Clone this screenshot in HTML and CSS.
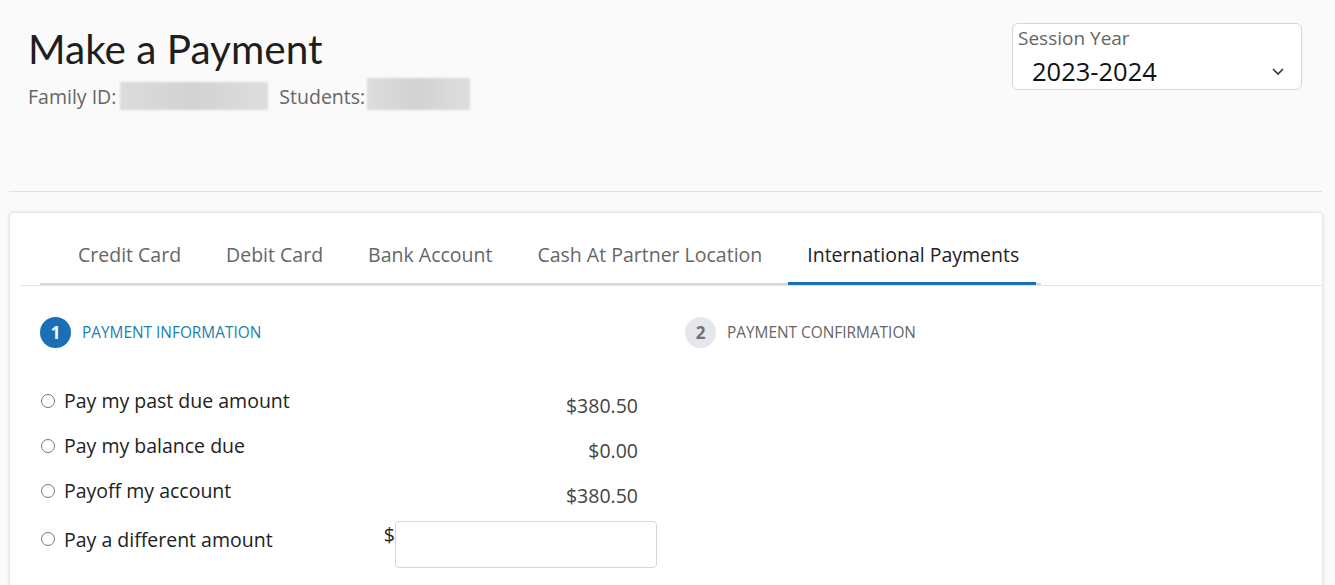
FILE: index.html
```html
<!DOCTYPE html>
<html lang="en">
<head>
  <meta charset="UTF-8" />
  <title>Make a Payment</title>
  <link rel="stylesheet" href="styles.css">
</head>
<body>

  <header class="page-head">
    <div class="head-left">
      <h1>Make a Payment</h1>
      <div class="ids">
        <span class="id-label">Family ID:</span>
        <span class="blur blur-family"></span>
        <span class="id-label students">Students:</span>
        <span class="blur blur-students"></span>
      </div>
    </div>
    <div class="session">
      <span class="session-label">Session Year</span>
      <div class="session-value">
        <span>2023-2024</span>
        <svg width="14" height="9" viewBox="0 0 14 9"><path d="M2 2l5 5 5-5" fill="none" stroke="#333" stroke-width="1.6"/></svg>
      </div>
    </div>
  </header>

  <hr class="divider">

  <main class="card">
    <div class="tabs-row">
      <nav class="tabs">
        <a class="tab">Credit Card</a>
        <a class="tab">Debit Card</a>
        <a class="tab">Bank Account</a>
        <a class="tab">Cash At Partner Location</a>
        <a class="tab active">International Payments</a>
      </nav>
    </div>

    <div class="steps">
      <div class="step current">
        <span class="step-num">1</span>
        <span class="step-name">PAYMENT INFORMATION</span>
      </div>
      <div class="step">
        <span class="step-num">2</span>
        <span class="step-name">PAYMENT CONFIRMATION</span>
      </div>
    </div>

    <form class="options">
      <label class="option">
        <input type="radio" name="amount">
        <span class="opt-text">Pay my past due amount</span>
        <span class="opt-amount">$380.50</span>
      </label>
      <label class="option">
        <input type="radio" name="amount">
        <span class="opt-text">Pay my balance due</span>
        <span class="opt-amount">$0.00</span>
      </label>
      <label class="option">
        <input type="radio" name="amount">
        <span class="opt-text">Payoff my account</span>
        <span class="opt-amount">$380.50</span>
      </label>
      <label class="option other">
        <input type="radio" name="amount">
        <span class="opt-text">Pay a different amount</span>
        <span class="dollar">$</span>
        <input type="text" class="amount-input">
      </label>
    </form>
  </main>

</body>
</html>
```

FILE: styles.css
```css
:root {
  --bg: #fafafa;
  --text: #222222;
  --muted: #666666;
  --blue: #1b6fb6;
  --step-blue: #1a7fb0;
  --border: #d6d6d6;
  --white: #ffffff;
}

body {
  margin: 0;
  background-color: var(--bg);
  color: var(--text);
  font-family: 'Open Sans', 'Noto Sans', sans-serif;
  overflow: hidden;
}

.page-head {
  display: flex;
  justify-content: space-between;
  padding: 23px 33px 0 28px;
  height: 191px;
  box-sizing: border-box;
}

h1 {
  margin: 0;
  font-family: 'Lato', sans-serif;
  font-weight: 400;
  font-size: 40.5px;
  line-height: 52px;
  color: #1e1e1e;
}

.ids {
  display: flex;
  align-items: center;
  margin-top: 7px;
  font-size: 19.5px;
  color: var(--muted);
}

.blur {
  display: inline-block;
  height: 28px;
  background: linear-gradient(90deg, #dcdcdc, #d2d2d2 50%, #dedede);
  filter: blur(1px);
}

.blur-family {
  width: 148px;
  margin: 0 11px 0 4px;
}

.blur-students {
  width: 103px;
  height: 32px;
  margin-top: -4px;
  margin-left: 2px;
}

.session {
  width: 290px;
  height: 67px;
  box-sizing: border-box;
  background: var(--white);
  border: 1px solid var(--border);
  border-radius: 6px;
  padding: 1px 16px 0 5px;
}

.session-label {
  display: block;
  font-size: 19px;
  color: var(--muted);
  line-height: 26px;
}

.session-value {
  display: flex;
  justify-content: space-between;
  align-items: center;
  padding-left: 14px;
  margin-top: 2px;
  font-size: 25.5px;
  color: #111;
  line-height: 36px;
}

.divider {
  border: none;
  border-top: 1px solid #e0e0e0;
  margin: 0 13px 0 9px;
}

.card {
  background: var(--white);
  margin: 21px 13px 0 10px;
  border-radius: 4px;
  box-shadow: 0 0 4px rgba(0, 0, 0, 0.18);
  padding: 0 0 30px 10px;
  height: 400px;
}

.tabs-row {
  padding: 20px 0 0 20px;
  border-bottom: 1px solid #e4e4e4;
}

.tabs {
  display: inline-flex;
  padding-right: 5px;
  border-bottom: 2px solid #d8d8d8;
}

.tab {
  padding: 0 19px;
  margin: 0 7px -2px 0;
  height: 52px;
  line-height: 44px;
  font-size: 19.5px;
  color: var(--muted);
  box-sizing: border-box;
}

.tab:first-child {
  padding-left: 38px;
}

.tab.active {
  color: var(--text);
  margin-right: 0;
  padding-right: 17px;
  border-bottom: 3px solid var(--blue);
}

.steps {
  display: flex;
  padding: 31px 0 0 20px;
}

.step {
  display: flex;
  align-items: center;
  width: 645px;
  font-size: 15.4px;
  color: var(--muted);
}

.step.current {
  width: 645px;
  margin-right: 0;
  flex: 0 0 645px;
}

.step.current {
  color: var(--step-blue);
}

.step + .step {
  margin-left: 0;
  padding-left: 0;
}

.step-num {
  width: 31px;
  height: 31px;
  flex: 0 0 31px;
  border-radius: 50%;
  background: #e5e7ea;
  color: #6b7280;
  font-weight: 700;
  font-size: 17px;
  display: flex;
  align-items: center;
  justify-content: center;
  margin-right: 11px;
}

.current .step-num {
  background: var(--blue);
  color: var(--white);
}

.options {
  padding: 41px 0 0 20px;
  width: 598px;
}

.option {
  display: flex;
  align-items: flex-start;
  height: 45px;
  font-size: 19.5px;
}

.option input[type="radio"] {
  margin: 5px 9px 0 1px;
  width: 14px;
  height: 14px;
}

.opt-text {
  flex: 1;
  line-height: 24px;
}

.opt-amount {
  color: #444;
  line-height: 24px;
  margin-top: 5px;
}

.option.other {
  height: 50px;
  margin-top: -3px;
}

.option.other input[type="radio"] {
  margin-top: 11px;
}

.option.other .opt-text {
  margin-top: 7px;
}

.dollar {
  margin-top: 2px;
  line-height: 24px;
  color: #222;
}

.amount-input {
  width: 262px;
  height: 47px;
  box-sizing: border-box;
  border: 1px solid var(--border);
  border-radius: 4px;
  margin-right: -19px;
}
```
